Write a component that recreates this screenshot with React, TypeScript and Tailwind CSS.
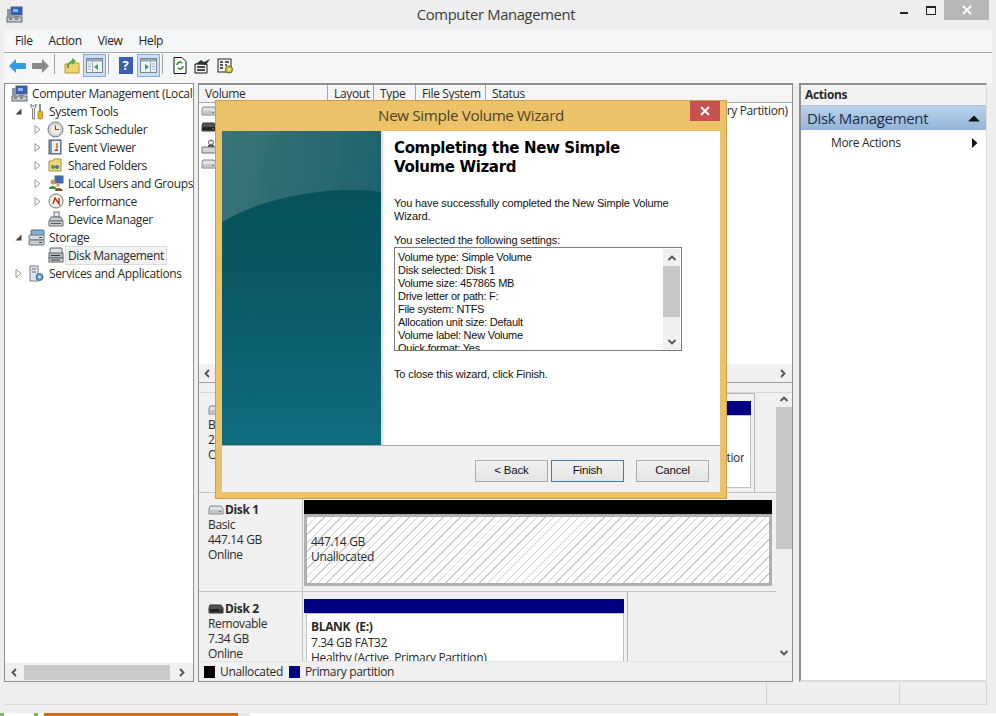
import { ReactNode } from "react";

// small drawn icons, all 16x16 unless noted
const DriveIcon = ({ dark = false }: { dark?: boolean }) => (
  <svg width="16" height="12" viewBox="0 0 16 12">
    <path d="M2 2h11l2 3v5H1V5z" fill={dark ? "#555" : "#dfe3e6"} stroke={dark ? "#333" : "#7d8489"} />
    <rect x="2" y="6" width="12" height="3" fill={dark ? "#222" : "#bfc5c9"} />
    <rect x="11" y="7" width="2" height="1" fill="#5a8a5a" />
  </svg>
);

const SystemDrive = () => (
  <svg width="16" height="15" viewBox="0 0 16 15">
    <circle cx="10" cy="3.500" r="2.500" fill="#e8eaec" stroke="#555" />
    <path d="M7 9V6h6v3z" fill="#555" />
    <path d="M1 8h13l1 2v4H1z" fill="#cfd4d8" stroke="#6d747a" />
  </svg>
);

const Computer = () => (
  <svg width="17" height="17" viewBox="0 0 17 17">
    <rect x="5" y="1" width="11" height="8" fill="#2f5fc0" stroke="#55606e" />
    <rect x="7" y="3" width="5" height="3" fill="#8fb4ee" />
    <path d="M8 9h5v2H8z" fill="#9aa3ad" />
    <rect x="1" y="11" width="15" height="5" fill="#c3c9cf" stroke="#5d6670" />
    <rect x="1" y="3" width="4" height="8" fill="#8b939c" />
    <path d="M3 13h3M9 13h3" stroke="#444" />
  </svg>
);

const Tools = () => (
  <svg width="15" height="17" viewBox="0 0 15 17">
    <path d="M2 1v3l1.500 1.500V16h2V5.500L7 4V1L5.500 3h-2z" fill="#e7e9ec" stroke="#666" strokeWidth=".8" />
    <rect x="10" y="1" width="2" height="8" fill="#8b8f94" />
    <rect x="9" y="8" width="4.500" height="8" rx="1.500" fill="#e8b320" stroke="#8d6a10" strokeWidth=".7" />
  </svg>
);

const Clock = () => (
  <svg width="17" height="17" viewBox="0 0 17 17">
    <circle cx="8.500" cy="8.500" r="7.500" fill="#d8dee6" stroke="#6c7480" />
    <circle cx="8.500" cy="8.500" r="5.500" fill="#f5f0dc" stroke="#a9afb8" strokeWidth=".6" />
    <path d="M8.500 4.500v4H12" fill="none" stroke="#7a4a20" strokeWidth="1.100" />
  </svg>
);

const EventLog = () => (
  <svg width="15" height="16" viewBox="0 0 15 16">
    <rect x="1" y="1" width="12" height="14" fill="#7f93b8" stroke="#4c5a78" />
    <rect x="4" y="2" width="8" height="12" fill="#eef0f4" />
    <path d="M9 4v5" stroke="#d09020" strokeWidth="2" />
    <path d="M6 12l3-3 1 3z" fill="#c03030" />
  </svg>
);

const SharedFolder = () => (
  <svg width="15" height="14" viewBox="0 0 15 14">
    <path d="M1 3h4l1-2h7v12H1z" fill="#f0d77c" stroke="#a88e3c" />
    <circle cx="5" cy="9" r="2" fill="#4c9a4c" />
    <circle cx="9" cy="9" r="2" fill="#3c70b8" />
  </svg>
);

const Users = () => (
  <svg width="16" height="16" viewBox="0 0 16 16">
    <rect x="7" y="1" width="8" height="7" fill="#3d6bc0" stroke="#5b6470" />
    <circle cx="5" cy="7" r="2.500" fill="#c89a50" />
    <path d="M1 14c0-4 7-4 8 0z" fill="#3f8f3f" />
    <circle cx="10" cy="10" r="2" fill="#e0b070" />
    <path d="M7 16c0-4 7-4 8 0z" fill="#8a4a20" />
  </svg>
);

const Perf = () => (
  <svg width="16" height="16" viewBox="0 0 16 16">
    <circle cx="8" cy="8" r="7" fill="#f4f1ea" stroke="#77706a" />
    <path d="M5 11l2-6 4 6V5" fill="none" stroke="#b03020" strokeWidth="1.400" />
  </svg>
);

const DeviceMgr = () => (
  <svg width="16" height="16" viewBox="0 0 16 16">
    <rect x="6" y="1" width="5" height="5" fill="#e8ecf0" stroke="#6b7178" />
    <path d="M3 6h10l2 4v5H1v-5z" fill="#c9ced3" stroke="#626970" />
    <path d="M2 10h12M3 12.500h10" stroke="#555" />
  </svg>
);

const Storage = () => (
  <svg width="17" height="17" viewBox="0 0 17 17">
    <rect x="3" y="1" width="13" height="6" rx="1" fill="#78b0d8" stroke="#4c6f8a" />
    <rect x="1" y="6" width="15" height="5" rx="1" fill="#d5dade" stroke="#6b7278" />
    <rect x="1" y="11" width="15" height="5" rx="1" fill="#c6cbd0" stroke="#6b7278" />
    <path d="M11 8.500h3M11 13.500h3" stroke="#444" />
  </svg>
);

const DiskMgr = () => (
  <svg width="16" height="16" viewBox="0 0 16 16">
    <rect x="2" y="1" width="12" height="6" rx="1" fill="#dfe3e7" stroke="#5f666d" />
    <rect x="1" y="6" width="14" height="5" fill="#b7bdc3" stroke="#5f666d" />
    <rect x="1" y="11" width="14" height="4" fill="#cfd3d8" stroke="#5f666d" />
    <path d="M3 8.500h9M3 13h9" stroke="#333" />
  </svg>
);

const Services = () => (
  <svg width="15" height="17" viewBox="0 0 15 17">
    <rect x="1" y="1" width="8" height="15" fill="#dfe4ea" stroke="#77808a" />
    <path d="M3 4h4M3 7h4" stroke="#667" />
    <circle cx="10.500" cy="12" r="3.500" fill="#5f9fc8" stroke="#3f6f90" />
    <circle cx="10.500" cy="12" r="1.200" fill="#e4eef6" />
  </svg>
);

const Open = () => (
  <svg width="7" height="9" viewBox="0 0 7 9">
    <path d="M1 .5l5 4-5 4z" fill="#fff" stroke="#9a9a9a" />
  </svg>
);

const Expanded = () => (
  <svg width="7" height="7" viewBox="0 0 7 7">
    <path d="M6.500.5v6h-6z" fill="#444" />
  </svg>
);

const Chevron = ({ dir, color = "#505050" }: { dir: "up" | "down" | "left" | "right"; color?: string }) => {
  const d = {
    up: "M1.500 6L5 2.500 8.500 6",
    down: "M1.500 3L5 6.500 8.500 3",
    left: "M6 1L2.500 4.500 6 8",
    right: "M3 1L6.500 4.500 3 8",
  }[dir];
  return (
    <svg width="10" height="9" viewBox="0 0 10 9">
      <path d={d} fill="none" stroke={color} strokeWidth="1.800" />
    </svg>
  );
};

const treeRows: { label: string; icon: ReactNode; depth: 0 | 1 | 2; arrow?: "open" | "closed"; sel?: boolean }[] = [
  { label: "Computer Management (Local)", icon: <Computer />, depth: 0 },
  { label: "System Tools", icon: <Tools />, depth: 1, arrow: "open" },
  { label: "Task Scheduler", icon: <Clock />, depth: 2, arrow: "closed" },
  { label: "Event Viewer", icon: <EventLog />, depth: 2, arrow: "closed" },
  { label: "Shared Folders", icon: <SharedFolder />, depth: 2, arrow: "closed" },
  { label: "Local Users and Groups", icon: <Users />, depth: 2, arrow: "closed" },
  { label: "Performance", icon: <Perf />, depth: 2, arrow: "closed" },
  { label: "Device Manager", icon: <DeviceMgr />, depth: 2 },
  { label: "Storage", icon: <Storage />, depth: 1, arrow: "open" },
  { label: "Disk Management", icon: <DiskMgr />, depth: 2, sel: true },
  { label: "Services and Applications", icon: <Services />, depth: 1, arrow: "closed" },
];

const settings = [
  "Volume type: Simple Volume",
  "Disk selected: Disk 1",
  "Volume size: 457865 MB",
  "Drive letter or path: F:",
  "File system: NTFS",
  "Allocation unit size: Default",
  "Volume label: New Volume",
  "Quick format: Yes",
];

const Tree = () => (
  <div className="flex w-[190px] shrink-0 flex-col overflow-hidden border border-[#8f8f8f] bg-white">
    <div className="flex-1 overflow-hidden">
      {treeRows.map((r) => (
        <div
          key={r.label}
          className={
            "flex h-[18px] items-center whitespace-nowrap " +
            (r.depth === 0 ? "pl-[3px]" : r.depth === 1 ? "pl-[7px]" : "pl-[26px]")
          }
        >
          {r.depth > 0 && (
            <span className="flex w-[13px] shrink-0 items-center justify-center">
              {r.arrow === "open" && <Expanded />}
              {r.arrow === "closed" && <Open />}
            </span>
          )}
          <span className="ml-[3px] flex w-[17px] shrink-0 items-center justify-center">{r.icon}</span>
          <span className={"ml-[2px] px-[2px] leading-[17px] " + (r.sel ? "bg-[#f2f2f2] outline outline-[#dcdcdc]" : "")}>
            {r.label}
          </span>
        </div>
      ))}
    </div>
    <div className="flex h-[18px] shrink-0 items-center bg-[#f0f0f0]">
      <span className="flex w-[19px] justify-center">
        <Chevron dir="left" />
      </span>
      <div className="h-[15px] w-[146px] bg-[#cbcbcb]" />
      <span className="flex flex-1 justify-center">
        <Chevron dir="right" />
      </span>
    </div>
  </div>
);

const columns = [
  { label: "Volume", w: "w-[129px]" },
  { label: "Layout", w: "w-[46px]" },
  { label: "Type", w: "w-[42px]" },
  { label: "File System", w: "w-[70px]" },
];

const DiskLabel = ({ name, type, size, state, dark }: { name: string; type: string; size: string; state: string; dark?: boolean }) => (
  <div className="w-[104px] shrink-0 border-r border-[#c4c4c4] bg-[#f0f0f0] pl-[9px] pt-[9px] leading-[15px]">
    <div className="flex items-center gap-[1px] font-bold">
      <DriveIcon dark={dark} />
      {name}
    </div>
    <div>{type}</div>
    <div>{size}</div>
    <div>{state}</div>
  </div>
);

const VolumePane = () => (
  <div className="flex w-[595px] shrink-0 flex-col overflow-hidden border border-t-2 border-[#8f8f8f] bg-white">
    <div className="flex h-[18px] shrink-0 items-center border-b border-[#a8a8a8] bg-[#f5f5f5]">
      {columns.map((c) => (
        <div key={c.label} className={"h-full border-r border-[#a8a8a8] pl-[6px] leading-[18px] " + c.w}>
          {c.label}
        </div>
      ))}
      <div className="pl-[6px] leading-[18px]">Status</div>
    </div>

    <div className="flex h-[261px] shrink-0 flex-col gap-[2px] pl-[2px]">
      <div className="flex h-[16px] items-center whitespace-nowrap">
        <DriveIcon />
        <span className="ml-[278px]">Healthy (Boot, Page File, Crash Dump, Primary Partition)</span>
      </div>
      <div className="h-[16px]">
        <DriveIcon dark />
      </div>
      <div className="h-[17px]">
        <SystemDrive />
      </div>
      <div className="h-[15px]">
        <DriveIcon />
      </div>
    </div>

    <div className="flex h-[18px] shrink-0 items-center justify-between bg-[#f0f0f0] px-1">
      <Chevron dir="left" />
      <Chevron dir="right" />
    </div>

    <div className="h-[11px] shrink-0 border-y border-t-[#a0a0a0] border-b-[#d8d8d8] bg-[#f0f0f0]" />

    <div className="flex h-[268px] shrink-0 overflow-hidden bg-[#f0f0f0]">
      <div className="flex min-w-0 flex-1 flex-col">
        <div className="flex h-[100px] shrink-0 border-b border-[#c4c4c4]">
          <DiskLabel name="Disk 0" type="Basic" size="232.88 GB" state="Online" />
          <div className="w-[452px] border-r border-t border-[#b4b4b4] pl-[1px] pr-[3px] pt-[7px]">
            <div className="h-[14px] bg-[#000080]" />
            <div className="h-[73px] overflow-hidden border border-[#c0c0c0] bg-white pt-[34px]">
              <div className="mr-[6px] flex justify-end overflow-hidden leading-[15px]">
                <span className="-mr-[3px] shrink-0">Partition</span>
              </div>
            </div>
          </div>
        </div>
        <div className="flex h-[99px] shrink-0 border-b border-[#c4c4c4]">
          <DiskLabel name="Disk 1" type="Basic" size="447.14 GB" state="Online" />
          <div className="flex-1 pl-[1px] pr-[4px] pt-[7px]">
            <div className="h-[14px] bg-black" />
            <div className="h-[72px] border-[3px] border-[#b0b0b0] bg-[repeating-linear-gradient(135deg,#cdcdcd_0_1px,#ffffff_1px_6px)] pl-[4px] pt-[17px] leading-[15px]">
              <div>447.14 GB</div>
              <div>Unallocated</div>
            </div>
          </div>
        </div>
        <div className="flex min-h-0 flex-1">
          <DiskLabel name="Disk 2" type="Removable" size="7.34 GB" state="Online" dark />
          <div className="flex h-full w-[325px] flex-col border-r border-[#b4b4b4] pl-[1px] pr-[3px] pt-[7px]">
            <div className="h-[14px] shrink-0 bg-[#000080]" />
            <div className="ml-[2px] flex-1 border border-[#c0c0c0] bg-white pl-[4px] pt-[5px] leading-[15.500px] whitespace-nowrap">
              <div className="font-bold">BLANK&nbsp; (E:)</div>
              <div>7.34 GB FAT32</div>
              <div>Healthy (Active, Primary Partition)</div>
            </div>
          </div>
        </div>
      </div>
      <div className="flex w-[16px] shrink-0 flex-col items-center bg-[#f0f0f0] pt-[2px]">
        <Chevron dir="up" />
        <div className="mt-[3px] h-[142px] w-full bg-[#c8c8c8]" />
        <div className="flex-1" />
        <div className="pb-[4px]">
          <Chevron dir="down" />
        </div>
      </div>
    </div>

    <div className="flex h-[20px] shrink-0 items-center gap-[5px] border-t border-[#e4e4e4] bg-[#f0f0f0] pl-[5px]">
      <span className="h-[12px] w-[11px] bg-black" />
      <span className="mr-[1px]">Unallocated</span>
      <span className="h-[12px] w-[11px] bg-[#000080]" />
      <span>Primary partition</span>
    </div>
  </div>
);

const ActionsPane = () => (
  <div className="ml-[2px] flex w-[188px] shrink-0 flex-col border-y-2 border-l-2 border-r border-t-[#8f8f8f] border-b-[#dcdcdc] border-l-[#8f8f8f] border-r-[#dcdcdc] bg-white">
    <div className="flex h-[21px] shrink-0 items-center border-b border-[#b8c6d6] bg-[#f2f2f2] pl-[4px] font-bold">Actions</div>
    <div className="flex h-[24px] shrink-0 items-center justify-between bg-gradient-to-b from-[#b9d2ea] to-[#93b4d8] pl-[6px] pr-[6px] text-[15px] text-[#1c2c48]">
      Disk Management
      <svg width="12" height="7" viewBox="0 0 12 7">
        <path d="M0 6.500L6 .5l6 6z" fill="#111" />
      </svg>
    </div>
    <div className="flex h-[26px] shrink-0 items-center justify-between pl-[30px] pr-[8px]">
      More Actions
      <svg width="6" height="10" viewBox="0 0 6 10">
        <path d="M0 0l5.500 5L0 10z" fill="#111" />
      </svg>
    </div>
  </div>
);

const WizardImage = () => (
  <svg className="h-full w-full" viewBox="0 0 159 314" preserveAspectRatio="none">
    <defs>
      <linearGradient id="top" x1="0" y1="0" x2="1" y2=".3">
        <stop offset="0" stopColor="#3a7478" />
        <stop offset="1" stopColor="#1f626c" />
      </linearGradient>
      <linearGradient id="low" x1="0" y1="0" x2="0" y2="1">
        <stop offset="0" stopColor="#05525a" />
        <stop offset=".45" stopColor="#0a5b68" />
        <stop offset="1" stopColor="#0f6d80" />
      </linearGradient>
    </defs>
    <rect width="159" height="314" fill="url(#top)" />
    <path d="M0 91C35 70 85 59 130 59Q146 59 159 61V314H0z" fill="url(#low)" />
  </svg>
);

const WizardButton = ({ children, focus }: { children: string; focus?: boolean }) => (
  <button
    className={
      "h-[22px] w-[73px] border bg-gradient-to-b from-[#f0f0f0] to-[#e4e4e4] text-[#111] " +
      (focus ? "border-[#3c7fb1]" : "border-[#acacac]")
    }
  >
    {children}
  </button>
);

const Wizard = () => (
  <div className="absolute left-[215px] top-[100px] flex h-[399px] w-[512px] flex-col border border-[#c9a04a] bg-[#ecc268] px-[6px] pb-[6px]">
    <div className="relative flex h-[30px] shrink-0 items-center justify-center pb-[2px] text-[15.200px] text-[#4a4326]">
      New Simple Volume Wizard
      <div className="absolute right-0 top-0 flex h-[20px] w-[30px] items-center justify-center bg-[#c75050]">
        <svg width="10" height="10" viewBox="0 0 10 10">
          <path d="M1 1l8 8M9 1l-8 8" stroke="#fff" strokeWidth="1.800" />
        </svg>
      </div>
    </div>
    <div className="flex min-h-0 flex-1 flex-col bg-[#f0f0f0]">
      <div className="flex h-[315px] shrink-0 border-b border-[#a8a8a8] bg-white">
        <div className="h-full w-[159px] shrink-0">
          <WizardImage />
        </div>
        <div className="w-[4px] shrink-0 bg-gradient-to-r from-[#d8d8d8] to-white" />
        <div className="flex-1 pl-[9px] font-['Liberation_Sans',sans-serif] text-[11px] tracking-[-0.13px] text-[#111]">
          <h1 className="mt-[8px] w-[240px] font-['DejaVu_Sans',sans-serif] text-[15px] font-bold leading-[19px] tracking-[-0.35px] text-black">
            Completing the New Simple Volume Wizard
          </h1>
          <p className="mt-[20px] w-[285px] leading-[13px]">
            You have successfully completed the New Simple Volume Wizard.
          </p>
          <p className="mt-[11px] leading-[13px]">You selected the following settings:</p>
          <div className="flex h-[104px] w-[288px] border border-[#7a7a7a]">
            <div className="flex-1 overflow-hidden pl-[3px] pt-[3px] leading-[13px] tracking-[-0.25px]">
              {settings.map((s) => (
                <div key={s}>{s}</div>
              ))}
            </div>
            <div className="my-[1px] mr-[1px] flex w-[17px] flex-col items-center bg-[#f0f0f0] pt-[5px]">
              <Chevron dir="up" />
              <div className="mt-[3px] h-[51px] w-full bg-[#c8c8c8]" />
              <div className="mt-[20px]">
                <Chevron dir="down" />
              </div>
            </div>
          </div>
          <p className="mt-[17px] leading-[13px]">To close this wizard, click Finish.</p>
        </div>
      </div>
      <div className="flex flex-1 items-start justify-end pr-[11px] pt-[14px] font-['Liberation_Sans',sans-serif] text-[11.500px] tracking-[-0.2px]">
        <WizardButton>&lt; Back</WizardButton>
        <span className="w-[3px]" />
        <WizardButton focus>Finish</WizardButton>
        <span className="w-[12px]" />
        <WizardButton>Cancel</WizardButton>
      </div>
    </div>
  </div>
);

const ToolbarIcon = ({ children, active }: { children: ReactNode; active?: boolean }) => (
  <div
    className={
      "flex h-[23px] w-[23px] items-center justify-center " + (active ? "border border-[#84acdd] bg-[#c9dff5]" : "")
    }
  >
    {children}
  </div>
);

const Sep = () => <div className="ml-[2px] mr-[5px] h-[20px] w-[1px] bg-[#a0a0a0]" />;

// window glyph of the show/hide pane buttons
const PaneIcon = ({ side }: { side: "left" | "right" }) => (
  <svg width="17" height="15" viewBox="0 0 17 15">
    <rect x=".5" y=".5" width="16" height="14" fill="#eef1f4" stroke="#7c8690" />
    <rect x="1" y="1" width="15" height="2.500" fill="#9aa7b3" />
    {side === "left" ? (
      <>
        <path d="M6.500 4v10" stroke="#98a4b0" />
        <path d="M2 6h3M2 8.500h3M2 11h3" stroke="#9fb0bf" />
        <path d="M12 6v6l-4-3z" fill="#3fa06a" />
      </>
    ) : (
      <>
        <path d="M10.500 4v10" stroke="#98a4b0" />
        <path d="M12 6h3M12 8.500h3M12 11h3" stroke="#9fb0bf" />
        <path d="M5 6v6l4-3z" fill="#3fa06a" />
      </>
    )}
  </svg>
);

export default function App() {
  return (
    <div className="relative flex h-[716px] w-[996px] flex-col overflow-hidden bg-white font-['Open_Sans',sans-serif] text-[12px] tracking-[-0.35px] text-[#2a2a2a]">
      <div className="flex h-[713px] flex-col bg-[#eeeeee] px-[4px]">
        {/* title bar */}
        <div className="relative -mx-[4px] flex h-[30px] shrink-0 items-center justify-center pb-[2px] pr-[4px] text-[14.800px] text-[#3c3c3c]">
          <span className="absolute left-[6px] top-[6px]">
            <Computer />
          </span>
          Computer Management
          <div className="absolute right-[7px] top-0 flex h-[20px] items-start">
            <span className="mr-[18px] mt-[12px] h-[2px] w-[8px] bg-[#222]" />
            <span className="mr-[8px] mt-[6px] h-[9px] w-[10px] border border-t-2 border-[#222]" />
            <span className="flex h-[20px] w-[45px] items-center justify-center bg-[#b7b7b7]">
              <svg width="10" height="10" viewBox="0 0 10 10">
                <path d="M1 1l8 8M9 1l-8 8" stroke="#fff" strokeWidth="1.800" />
              </svg>
            </span>
          </div>
        </div>

        {/* menu */}
        <div className="flex h-[23px] shrink-0 items-center gap-[16px] border-b border-[#a8a8a8] bg-[#f5f6f7] pl-[11px] text-[#222]">
          <span>File</span>
          <span>Action</span>
          <span>View</span>
          <span>Help</span>
        </div>

        {/* toolbar */}
        <div className="flex h-[30px] shrink-0 items-start bg-[#f5f6f7] pl-[2px] pt-[1px]">
          <ToolbarIcon>
            <svg width="17" height="14" viewBox="0 0 17 14">
              <path d="M0 7L7 0v4h9a1 1 0 011 1v4a1 1 0 01-1 1H7v4z" fill="#2f9be0" />
            </svg>
          </ToolbarIcon>
          <ToolbarIcon>
            <svg width="17" height="14" viewBox="0 0 17 14">
              <path d="M17 7l-7-7v4H1a1 1 0 00-1 1v4a1 1 0 001 1h9v4z" fill="#8a8a8a" />
            </svg>
          </ToolbarIcon>
          <Sep />
          <ToolbarIcon>
            <svg width="16" height="16" viewBox="0 0 16 16">
              <path d="M1 6h5l1-1h8v10H1z" fill="#f1d26c" stroke="#b79a3a" />
              <path d="M3 10V6l5-4V0l4 3-4 4V4.500L5 7v3z" fill="#5aa83c" />
            </svg>
          </ToolbarIcon>
          <ToolbarIcon active>
            <PaneIcon side="left" />
          </ToolbarIcon>
          <Sep />
          <ToolbarIcon>
            <div className="flex h-[17px] w-[14px] items-center justify-center bg-[#3a5fae] text-[13px] font-bold leading-none text-white">?</div>
          </ToolbarIcon>
          <ToolbarIcon active>
            <PaneIcon side="right" />
          </ToolbarIcon>
          <Sep />
          <ToolbarIcon>
            <svg width="14" height="17" viewBox="0 0 14 17">
              <path d="M1 .5h8l4 4v12H1z" fill="#fff" stroke="#111" />
              <path d="M4 8a3 3 0 015-2M10 9a3 3 0 01-5 2" fill="none" stroke="#2f9a3c" strokeWidth="1.800" />
            </svg>
          </ToolbarIcon>
          <ToolbarIcon>
            <svg width="17" height="16" viewBox="0 0 17 16">
              <path d="M1 6h12v9H1z" fill="#f3f3f3" stroke="#111" />
              <path d="M3 9h8M3 12h8" stroke="#111" strokeWidth="1.500" />
              <path d="M2 6l5-4 3 2 6-3-4 6z" fill="#333" />
            </svg>
          </ToolbarIcon>
          <ToolbarIcon>
            <svg width="17" height="16" viewBox="0 0 17 16">
              <rect x="1" y="1" width="13" height="13" fill="#f4f4ee" stroke="#222" />
              <path d="M3 4h3M8 4h4M3 7h3M8 7h2M3 10h3" stroke="#222" strokeWidth="1.500" />
              <circle cx="12" cy="11.500" r="3.500" fill="#d8c22e" stroke="#6e6410" />
              <circle cx="12" cy="11.500" r="1" fill="#fff" />
            </svg>
          </ToolbarIcon>
        </div>

        {/* panes */}
        <div className="flex h-[599px] shrink-0 gap-[4px]">
          <Tree />
          <VolumePane />
          <ActionsPane />
        </div>

        {/* status bar */}
        <div className="mt-[1px] flex h-[22px] w-[983px] shrink-0 border-b border-[#d8d8d8] text-[#444]">
          <div className="w-[763px] border-r border-[#d4d4d4]" />
          <div className="w-[133px] border-r border-[#d4d4d4]" />
          <div className="flex-1 border-r border-[#d4d4d4]" />
        </div>
      </div>

      {/* bit of taskbar left under the window */}
      <div className="flex h-[3px] items-stretch">
        <span className="w-[38px] border-x-[4px] border-[#7cb85a] bg-white" />
        <span className="ml-[6px] w-[194px] bg-[#d2691e]" />
        <span className="w-[12px] bg-[#e4e8ec]" />
      </div>

      <Wizard />
    </div>
  );
}
